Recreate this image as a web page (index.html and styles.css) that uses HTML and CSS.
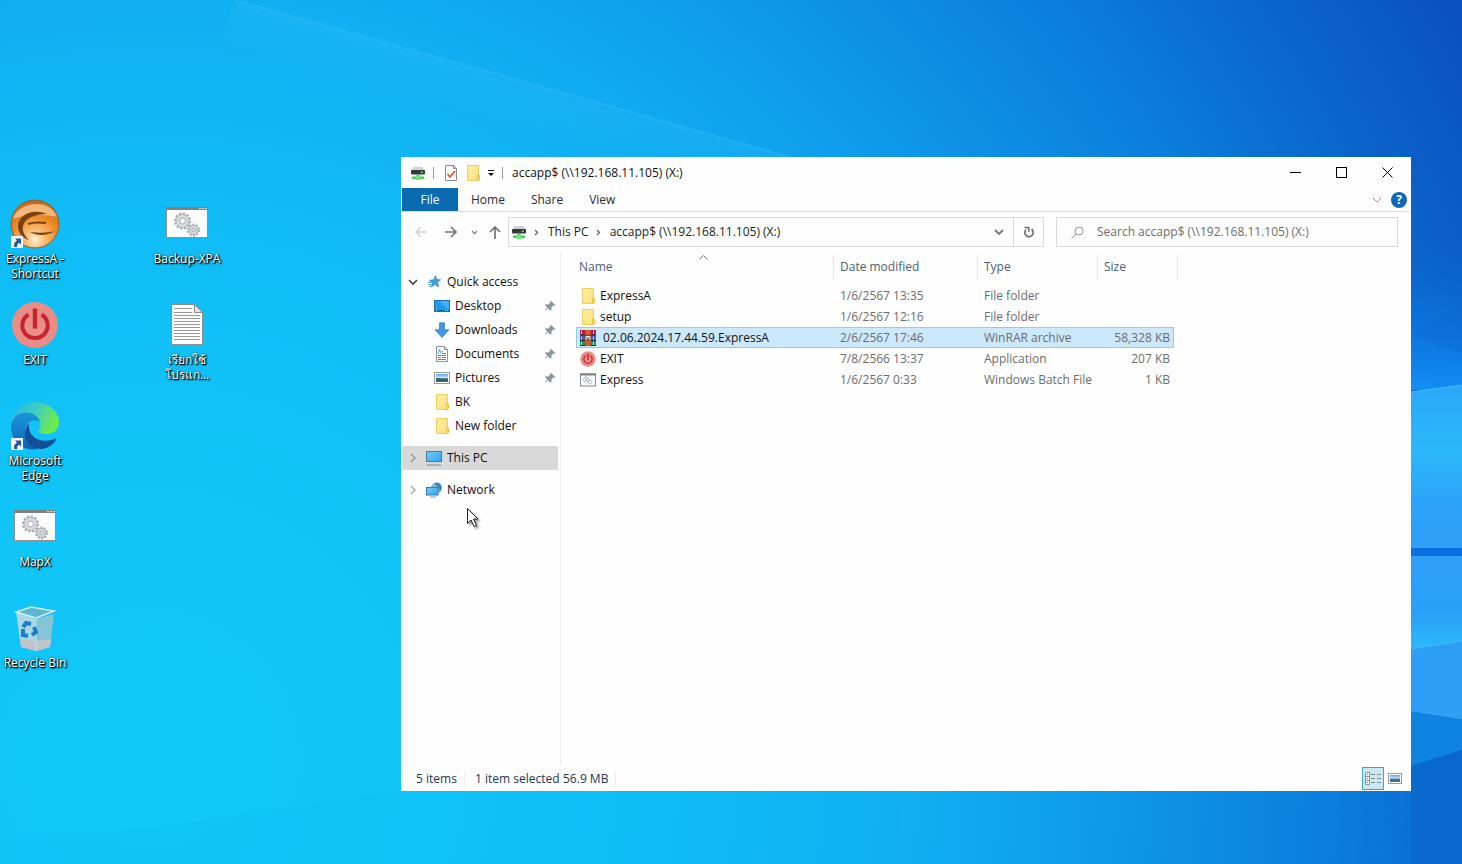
FILE: index.html
```html
<!DOCTYPE html>
<html lang="en">
<head>
<meta charset="utf-8">
<title>accapp$ (\\192.168.11.105) (X:)</title>
<link rel="stylesheet" href="styles.css">
</head>
<body>
<svg class="defs" aria-hidden="true">
  <defs>
    <linearGradient id="fold" x1="0" y1="0" x2="1" y2="1"><stop offset="0" stop-color="#fdeea2"/><stop offset="1" stop-color="#fbe17c"/></linearGradient>
    <linearGradient id="scr" x1="0" y1="0" x2="1" y2="1"><stop offset="0" stop-color="#72cdfb"/><stop offset="1" stop-color="#2fa5ec"/></linearGradient>
    <linearGradient id="photo" x1="0" y1="0" x2="0" y2="1"><stop offset="0" stop-color="#5d9ff0"/><stop offset=".45" stop-color="#c4e6f8"/><stop offset=".6" stop-color="#3d6f74"/><stop offset="1" stop-color="#3b78a6"/></linearGradient>
    <symbol id="i-folder" viewBox="0 0 16 16"><path d="M2.500.5h11v15h-11z" fill="url(#fold)" stroke="#ecd15f"/><path d="M12.500 10.500h2v4l-1 1h-1z" fill="#fbe07a" stroke="#e3bf3c"/></symbol>
    <symbol id="i-drive" viewBox="0 0 16 16"><path d="M3.500 2h9l2 3.500h-13z" fill="#cfd3d3"/><rect x="1" y="5" width="14" height="4.500" rx="1" fill="#35393b"/><rect x="10.500" y="6.500" width="2.500" height="1.500" fill="#38e04b"/><path d="M6.500 9.500h3V11h-3z" fill="#66aa66"/><path d="M2 11.500h12V14H2z" fill="#4dcc55"/><path d="M5.500 10.500h5V15h-5z" fill="#79e47e"/></symbol>
    <symbol id="i-check" viewBox="0 0 16 16"><path d="M2.500.5h8l3 3v12h-11z" fill="#fff" stroke="#8b8b8b"/><path d="M10.500.5v3h3" fill="none" stroke="#8b8b8b"/><path d="M4.500 9l2.500 3 5-6" fill="none" stroke="#e2502c" stroke-width="1.700"/></symbol>
    <symbol id="i-star" viewBox="0 0 16 16"><path d="M9.500 1.500l1.200 4 4 .3-3.300 2.600 1.300 4.600-3.700-2.500L5.200 13l1-4L3.500 6.300l4.200-.6z" fill="#3aa2e4" stroke="#2580c4" stroke-width=".6"/><path d="M1.500 8.500h4M2 10.500h3.500M3 12.500h2" stroke="#68b8e8"/></symbol>
    <symbol id="i-desktop" viewBox="0 0 16 16"><rect x=".5" y="2.500" width="15" height="11" fill="#219bee" stroke="#1571b3"/><path d="M15 3v9L5 3z" fill="#41b2f7"/><path d="M1 12.500h14" stroke="#0b62a3"/><path d="M2 12.500h1m8 0h1m1 0h1" stroke="#fff"/></symbol>
    <symbol id="i-down" viewBox="0 0 16 16"><path d="M5.500.8h5v7H15L8 15.500 1 7.800h4.500z" fill="#3f97e2" stroke="#2d7dca" stroke-width=".7"/></symbol>
    <symbol id="i-doc" viewBox="0 0 16 16"><path d="M2.500.5h8l3 3v12h-11z" fill="#fff" stroke="#8d9499"/><path d="M10.500.5v3h3" fill="none" stroke="#8d9499"/><path d="M4 7.500l1.500-4L7 7.500M8 5.500h1M8 7.500h4M4 9.500h8M4 11.500h3m1 0h4M4 13.500h8" stroke="#3a97c9" fill="none"/></symbol>
    <symbol id="i-pic" viewBox="0 0 16 16"><rect x=".5" y="2.500" width="15" height="11" fill="#fff" stroke="#989ca0"/><path d="M2 4h12v8H2z" fill="url(#photo)"/><path d="M2 8.500c3-1 6 1.500 12 1V11H2z" fill="#315e69"/></symbol>
    <symbol id="i-pc" viewBox="0 0 16 16"><rect x=".5" y="1.500" width="15" height="10" fill="url(#scr)" stroke="#477b9d"/><path d="M1 15h14" stroke="#75899a"/></symbol>
    <symbol id="i-net" viewBox="0 0 16 16"><circle cx="10.500" cy="6" r="5.500" fill="#8bb9d2"/><path d="M8 1.500c3 1 1.500 3 3.500 3s1 3 2.500 4.500C17 6 15.500 1 10.500.5z" fill="#3585b8"/><rect x=".5" y="5.500" width="11.500" height="7.500" fill="url(#scr)" stroke="#347eab"/><path d="M4 15h6" stroke="#6ba2c2"/></symbol>
    <symbol id="i-pin" viewBox="0 0 12 12"><path d="M7 .8L11.200 5l-1.100.7-.7-.2-2 2.200.1 2.300-.9.800L4.200 8.400 1 11.200l-.3-.3L3.400 7.600 1 5.200l.8-.9 2.400.2 2.100-2-.2-.8z" fill="#8b979e"/></symbol>
    <symbol id="i-rar" viewBox="0 0 16 16"><path fill="#b5204c" d="M0 0h16v5H0z"/><path fill="#4658b9" d="M0 5h16v6H0z"/><path fill="#27904a" d="M0 11h16v5H0z"/><path d="M0 5h16M0 10.500h16M0 15.500h16" stroke="#202c3c"/><path d="M1.500 1v3M1.500 6.500v3M1.500 12v3M13.500 1v3M13.500 6.500v3M13.500 12v3" stroke="#d6d9dc"/><path fill="#dc5a27" d="M5.500 0h5v16h-5z"/><path fill="#8d3a24" d="M4.500 5h7v5.500h-7z"/><path d="M6 10V6.500h4V10M8 6.500V9" stroke="#fff" fill="none"/></symbol>
    <symbol id="i-power" viewBox="0 0 48 48"><circle cx="24" cy="24" r="23" fill="#ea8d85"/><path d="M17.500 13.500a12.700 12.700 0 1 0 13 0" fill="none" stroke="#c72432" stroke-width="4"/><path d="M24 7.500v20" stroke="#c72432" stroke-width="4.500"/></symbol>
    <symbol id="i-batch" viewBox="0 0 16 16"><rect x=".5" y="2" width="15" height="12" fill="#fbfbfb" stroke="#868b8f"/><path d="M0 2.500h16" stroke="#7e8387" stroke-width="2"/><circle cx="6" cy="7.500" r="2.500" fill="none" stroke="#89959c" stroke-dasharray="1.200 .5"/><circle cx="6" cy="7.500" r="1" fill="#9aa5ab"/><circle cx="10" cy="10" r="1.800" fill="none" stroke="#81a4b4" stroke-dasharray="1.200 .4"/></symbol>
    <symbol id="i-gears" viewBox="0 0 42 31"><rect x=".5" y=".5" width="41" height="30" fill="#fbfbfb" stroke="#8f8f8f"/><path d="M0 1.500h42" stroke="#808080" stroke-width="3"/><path d="M33 1.500h2m1 0h2m1 0h2" stroke="#ddd"/>
      <circle cx="16.500" cy="14" r="7.500" fill="none" stroke="#a3aaad" stroke-width="2" stroke-dasharray="2.300 1.627"/><circle cx="16.500" cy="14" r="6.500" fill="#d9dddf" stroke="#a3aaad" stroke-width=".8"/><circle cx="16.500" cy="14" r="3" fill="#fff" stroke="#a3aaad"/>
      <circle cx="27.500" cy="23" r="5.500" fill="none" stroke="#a3aaad" stroke-width="1.800" stroke-dasharray="2 1.456"/><circle cx="27.500" cy="23" r="4.600" fill="#d3d8da" stroke="#a3aaad" stroke-width=".8"/><circle cx="27.500" cy="23" r="1.500" fill="#fff" stroke="#9ba3a7"/></symbol>
    <symbol id="i-short" viewBox="0 0 12 12"><rect width="12" height="12" fill="#f4f5f7"/><path d="M4 2.500h6v6L8 6.700C6.500 7.600 6 9 6.300 11H3.200C2.500 8 3.700 5.800 5.900 4.500z" fill="#2756a0"/></symbol>
  </defs>
</svg>

<main class="desktop">
  <svg class="wallpaper" viewBox="0 0 1462 864" preserveAspectRatio="none" aria-hidden="true">
    <defs>
      <radialGradient id="sky" gradientUnits="userSpaceOnUse" cx="150" cy="760" r="1510">
        <stop offset="0" stop-color="#10c9fa"/><stop offset=".2" stop-color="#10c4f8"/><stop offset=".36" stop-color="#10bcf6"/><stop offset=".5" stop-color="#10b0f2"/><stop offset=".6" stop-color="#0f9fec"/><stop offset=".76" stop-color="#0b82dd"/><stop offset=".88" stop-color="#0a68cd"/><stop offset="1" stop-color="#0a50be"/>
      </radialGradient>
      <linearGradient id="beam" gradientUnits="userSpaceOnUse" x1="515" y1="78" x2="500" y2="130"><stop offset="0" stop-color="#35c0fa" stop-opacity=".22"/><stop offset="1" stop-color="#35c0fa" stop-opacity="0"/></linearGradient>
      <linearGradient id="glowtop" x1="0" y1="0" x2="0" y2="1"><stop offset="0" stop-color="#0a66d4" stop-opacity="0"/><stop offset="1" stop-color="#108ef5"/></linearGradient>
      <linearGradient id="pane1" x1="0" y1="0" x2="0" y2="1"><stop offset="0" stop-color="#2aa7f7"/><stop offset=".4" stop-color="#2cb8fa"/><stop offset=".75" stop-color="#2ca2f8"/><stop offset="1" stop-color="#2ea0f6"/></linearGradient>
      <linearGradient id="pane2" x1="0" y1="0" x2="0" y2="1"><stop offset="0" stop-color="#309ff6"/><stop offset=".6" stop-color="#28a0f7"/><stop offset="1" stop-color="#2bbaf9"/></linearGradient>
    </defs>
    <rect width="1462" height="864" fill="url(#sky)"/>
    <path d="M235 0L790 157 770 210 215 53z" fill="url(#beam)"/>
    <path d="M235 0L790 157" stroke="#4cc2f9" stroke-opacity=".25" stroke-width="2"/>
    <path d="M400 791h500v73H0v-24C150 835 260 810 400 791z" fill="#0fb5f3" fill-opacity=".08"/>
    <path d="M1411 240h51v150h-51z" fill="url(#glowtop)"/>
    <path d="M1411 335l51 18v-50z" fill="#0a5fcf" fill-opacity=".25"/>
    <path d="M1411 392l51-7v163h-51z" fill="url(#pane1)"/>
    <path d="M1411 392l51-7" stroke="#49b8fa"/>
    <path d="M1411 548h51v8h-51z" fill="#0b70e2"/>
    <path d="M1411 556h51v85l-51 8z" fill="url(#pane2)"/>
    <path d="M1411 649l51-8v78l-51-8z" fill="#2e9df4"/>
    <path d="M1411 649l51-8M1411 711l51 8" stroke="#41bdf6"/>
    <path d="M1411 711l51 8v31l-51 16z" fill="#0e83e2"/>
    <path d="M1411 766l51-16v114h-51z" fill="#0a67cc" fill-opacity=".7"/>
  </svg>

  <ul class="shortcuts">
    <li><a href="#" class="shortcut"><svg class="art" viewBox="0 0 50 50">
      <defs><radialGradient id="orb" cx=".5" cy=".82" r=".8"><stop offset="0" stop-color="#fff2d8"/><stop offset=".25" stop-color="#f9bd78"/><stop offset=".6" stop-color="#f08a24"/><stop offset="1" stop-color="#b8681c"/></radialGradient></defs>
      <circle cx="25" cy="25" r="24" fill="url(#orb)" stroke="#94602c"/><path d="M3 20C7 3 40-2 47 18c-10-3-32-3-44 2z" fill="#fbc88f" fill-opacity=".8"/><path d="M37 15C24 9 8 15 8 27c0 8 5 12 11 14-5-5-7-9-6-14 2-8 12-12 24-12z" fill="#7a4214"/><path d="M18 25c6-2 10-2 18-1" stroke="#7a4214" stroke-width="2" fill="none"/><path d="M20 33c7 4 17 4 25-1-7 2-16 2-25 1z" fill="#7a4214"/><use href="#i-short" x="1" y="37" width="12" height="12"/></svg><span>ExpressA -<br>Shortcut</span></a></li>
    <li><a href="#" class="shortcut"><svg class="art" viewBox="0 0 50 50"><use href="#i-power" x="1" y="1" width="48" height="48"/></svg><span>EXIT</span></a></li>
    <li><a href="#" class="shortcut"><svg class="art" viewBox="0 0 50 50">
      <defs><linearGradient id="e1" x1="0" y1="0" x2="1" y2=".4"><stop offset="0" stop-color="#29b5e6"/><stop offset=".5" stop-color="#3bccc9"/><stop offset="1" stop-color="#6eea4d"/></linearGradient><linearGradient id="e2" x1="0" y1="0" x2="0" y2="1"><stop offset="0" stop-color="#1a96dc"/><stop offset="1" stop-color="#0e62b5"/></linearGradient></defs>
      <path d="M1 24C2 10 12 1 25 1c14 0 24 10 24 20 0 9-7 12-13 12-5 0-8-1-7-4 2-2 2-4 1-7C27 11 9 9 1 24z" fill="url(#e1)"/><path d="M1 26C2 8 26 7 30 21c-5-4-15-1-15 9 0 9 7 15 13 18C12 51 1 39 1 26z" fill="url(#e2)"/><path d="M19 22c-9 11-2 26 13 26 6-1 11-4 14-9 1-1 0-2-2-1C32 43 17 37 19 22z" fill="#134f98"/><use href="#i-short" x="1" y="37" width="12" height="12"/></svg><span>Microsoft<br>Edge</span></a></li>
    <li><a href="#" class="shortcut"><svg class="art" viewBox="0 0 50 50"><use href="#i-gears" x="4" y="8" width="42" height="31"/></svg><span>MapX</span></a></li>
    <li><a href="#" class="shortcut"><svg class="art" viewBox="0 0 50 50">
      <path d="M6 9l20 7 1 32-16-4z" fill="#a9d7e6"/><path d="M26 16l18-5-4 33-13 4z" fill="#86c4d8"/><path d="M10 36l16 2 15-2-1 8-13 4-16-4z" fill="#c3c4c8"/><path d="M6 9L21 4l23 4-18 7z" fill="#5fb5cc" stroke="#d6edf4" stroke-width="1.500"/><path d="M26 16v32" stroke="#b8dfea"/><g fill="none" stroke="#1c7ecb" stroke-width="4"><path d="M13 24l3-4 5 1"/><path d="M24 24l2 5-4 3"/><path d="M18 33l-5-1 0-6"/></g></svg><span>Recycle Bin</span></a></li>
    <li><a href="#" class="shortcut"><svg class="art" viewBox="0 0 50 50"><use href="#i-gears" x="4" y="8" width="42" height="31"/></svg><span>Backup-XPA</span></a></li>
    <li><a href="#" class="shortcut"><svg class="art" viewBox="0 0 50 50"><path d="M9.500 4.500h23l8 8v32h-31z" fill="#fbfbfb" stroke="#8c8c8c"/><path d="M32.500 4.500v8h8z" fill="#e5e5e5" stroke="#8c8c8c"/><path d="M12 8.500h18m-18 4h18m-18 3h26m-26 3h26m-26 3h26m-26 3h26m-26 3h26m-26 3h26m-26 3h26m-26 3h26m-26 3h26" stroke="#999"/></svg><span lang="th">เรียกใช้<br>โปรแก...</span></a></li>
  </ul>

  <section class="window">
    <header class="titlebar">
      <svg class="ico"><use href="#i-drive"/></svg><i class="rule"></i>
      <button class="tool" aria-label="Properties"><svg class="ico"><use href="#i-check"/></svg></button>
      <button class="tool" aria-label="New folder"><svg class="ico"><use href="#i-folder"/></svg></button>
      <button class="tool" aria-label="Customize Quick Access Toolbar"><svg width="8" height="8"><path d="M1 1.500h6" stroke="#111"/><path d="M1 4h6L4 7z" fill="#111"/></svg></button>
      <i class="rule"></i>
      <h1>accapp$ (\\192.168.11.105) (X:)</h1>
      <div class="controls">
        <button aria-label="Minimize"><svg width="11" height="11"><path d="M0 5.500h11" stroke="#000"/></svg></button>
        <button aria-label="Maximize"><svg width="11" height="11"><rect x=".5" y=".5" width="10" height="10" fill="none" stroke="#000"/></svg></button>
        <button aria-label="Close"><svg width="11" height="11"><path d="M.5.5l10 10m0-10l-10 10" stroke="#000"/></svg></button>
      </div>
    </header>

    <nav class="tabs">
      <button class="file">File</button><button>Home</button><button>Share</button><button>View</button>
      <div class="help">
        <button aria-label="Expand the Ribbon"><svg width="10" height="6"><path d="M1 1l4 4 4-4" fill="none" stroke="#999"/></svg></button>
        <button class="question" aria-label="Help">?</button>
      </div>
    </nav>

    <div class="navigate">
      <div class="arrows">
        <button aria-label="Back" disabled><svg width="14" height="12"><path d="M7 1L2 6l5 5M2 6h11" fill="none" stroke="#d2d2d2" stroke-width="1.500"/></svg></button>
        <button aria-label="Forward"><svg width="14" height="12"><path d="M7 1l5 5-5 5M12 6H1" fill="none" stroke="#737373" stroke-width="1.700"/></svg></button>
        <button class="small" aria-label="Recent locations"><svg width="7" height="5"><path d="M1 1l2.500 2.500L6 1" fill="none" stroke="#888" stroke-width="1.400"/></svg></button>
        <button aria-label="Up"><svg width="12" height="13"><path d="M1 6l5-5 5 5M6 1v12" fill="none" stroke="#737373" stroke-width="1.700"/></svg></button>
      </div>
      <div class="address">
        <svg class="ico"><use href="#i-drive"/></svg>
        <svg class="sep" width="5" height="7"><path d="M1 1l2.500 2.500L1 6" fill="none" stroke="#666" stroke-width="1.300"/></svg>
        <a href="#">This PC</a>
        <svg class="sep" width="5" height="7"><path d="M1 1l2.500 2.500L1 6" fill="none" stroke="#666" stroke-width="1.300"/></svg>
        <a href="#">accapp$ (\\192.168.11.105) (X:)</a>
        <button class="drop" aria-label="Previous locations"><svg width="10" height="7"><path d="M1 1l4 4 4-4" fill="none" stroke="#777" stroke-width="1.800"/></svg></button>
        <button class="refresh" aria-label="Refresh"><svg width="12" height="13"><path d="M3 3.500A4.200 4.200 0 1 0 8.500 3" fill="none" stroke="#6b6b6b" stroke-width="1.600"/><path d="M1.500 1.500h4.200v4.200" fill="none" stroke="#6b6b6b" stroke-width="1.500"/></svg></button>
      </div>
      <label class="search">
        <svg width="13" height="13"><circle cx="8" cy="5" r="4" fill="none" stroke="#999"/><path d="M5 8l-4.500 4.500" stroke="#999"/></svg>
        <input type="text" aria-label="Search" placeholder="Search accapp$ (\\192.168.11.105) (X:)">
      </label>
    </div>

    <div class="body">
      <nav class="tree">
        <a href="#" class="root"><svg class="chev" viewBox="0 0 10 10"><path d="M1 3l4 4 4-4" fill="none" stroke="#444" stroke-width="1.600"/></svg><svg class="ico"><use href="#i-star"/></svg><span>Quick access</span></a>
        <a href="#"><svg class="ico"><use href="#i-desktop"/></svg><span>Desktop</span><svg class="pin"><use href="#i-pin"/></svg></a>
        <a href="#"><svg class="ico"><use href="#i-down"/></svg><span>Downloads</span><svg class="pin"><use href="#i-pin"/></svg></a>
        <a href="#"><svg class="ico"><use href="#i-doc"/></svg><span>Documents</span><svg class="pin"><use href="#i-pin"/></svg></a>
        <a href="#"><svg class="ico"><use href="#i-pic"/></svg><span>Pictures</span><svg class="pin"><use href="#i-pin"/></svg></a>
        <a href="#"><svg class="ico"><use href="#i-folder"/></svg><span>BK</span></a>
        <a href="#"><svg class="ico"><use href="#i-folder"/></svg><span>New folder</span></a>
        <a href="#" class="root apart current"><svg class="chev" viewBox="0 0 10 10"><path d="M3 1l4 4-4 4" fill="none" stroke="#919191" stroke-width="1.400"/></svg><svg class="ico"><use href="#i-pc"/></svg><span>This PC</span></a>
        <a href="#" class="root apart"><svg class="chev" viewBox="0 0 10 10"><path d="M3 1l4 4-4 4" fill="none" stroke="#a5a5a5" stroke-width="1.400"/></svg><svg class="ico"><use href="#i-net"/></svg><span>Network</span></a>
      </nav>

      <div class="files">
        <table>
          <thead><tr>
            <th class="name">Name<svg class="sort" width="9" height="5"><path d="M.5 4.500l4-4 4 4" fill="none" stroke="#777"/></svg></th>
            <th class="date">Date modified</th><th class="type">Type</th><th class="size">Size</th>
          </tr></thead>
          <tbody>
            <tr><td><div class="entry"><svg class="ico"><use href="#i-folder"/></svg>ExpressA</div></td><td>1/6/2567 13:35</td><td>File folder</td><td></td></tr>
            <tr><td><div class="entry"><svg class="ico"><use href="#i-folder"/></svg>setup</div></td><td>1/6/2567 12:16</td><td>File folder</td><td></td></tr>
            <tr class="selected"><td><div class="entry wide"><svg class="ico"><use href="#i-rar"/></svg>02.06.2024.17.44.59.ExpressA</div></td><td>2/6/2567 17:46</td><td>WinRAR archive</td><td>58,328 KB</td></tr>
            <tr><td><div class="entry"><svg class="ico"><use href="#i-power"/></svg>EXIT</div></td><td>7/8/2566 13:37</td><td>Application</td><td>207 KB</td></tr>
            <tr><td><div class="entry"><svg class="ico"><use href="#i-batch"/></svg>Express</div></td><td>1/6/2567 0:33</td><td>Windows Batch File</td><td>1 KB</td></tr>
          </tbody>
        </table>
      </div>
    </div>

    <footer class="status">
      <span class="count">5 items</span><span class="picked">1 item selected</span><span class="weight">56.9 MB</span>
      <div class="views">
        <button class="on" aria-label="Details view"><svg width="18" height="15"><path d="M1.500 1.500h4v12h-4zM1.500 5.500h4m-4 4h4" fill="#fff" stroke="#8e8e8e"/><path d="M3 3.500h1m-1 4h1" stroke="#3b83c4"/><path d="M3 11.500h1" stroke="#d14b4b"/><path d="M7 3.500h4m2 0h4M7 7.500h4m2 0h4M7 11.500h4m2 0h4" stroke="#7b8d92"/></svg></button>
        <button aria-label="Large thumbnails"><svg width="14" height="12"><rect x=".5" y=".5" width="13" height="10" fill="#fff" stroke="#989ca0"/><path d="M2 2h10v7H2z" fill="url(#photo)"/></svg></button>
      </div>
    </footer>
  </section>

  <svg class="cursor" viewBox="0 0 14 22" aria-hidden="true"><path d="M1.500 1.500v15l3.500-3.500 3 6.500 2.500-1-3-6.500H12z" fill="#fff" stroke="#222"/></svg>
</main>
</body>
</html>
```
FILE: styles.css
```css
* { box-sizing: border-box; }

body {
  margin: 0;
  font: 12px/16px "Open Sans", "Noto Sans", sans-serif;
  color: #111;
}

button, input { font: inherit; color: inherit; border: 0; padding: 0; background: none; }
button { display: flex; align-items: center; justify-content: center; }
a { color: inherit; text-decoration: none; }
svg { display: block; flex: none; }

.defs { position: absolute; width: 0; height: 0; }
.ico { width: 16px; height: 16px; }

.desktop { position: relative; min-height: 100vh; overflow: hidden; background: #10b3f4; }
.wallpaper { position: absolute; inset: 0; width: 100%; height: 100%; }

/* desktop shortcuts */
.shortcuts {
  position: absolute;
  left: 0;
  top: 199px;
  margin: 0;
  padding: 0;
  list-style: none;
  display: grid;
  grid-auto-flow: column;
  grid-template-rows: repeat(5, 101px);
  grid-auto-columns: 70px;
  column-gap: 82px;
}
.shortcut {
  display: flex;
  flex-direction: column;
  align-items: center;
  gap: 2px;
  line-height: 15px;
  text-align: center;
  white-space: nowrap;
  color: #fff;
  text-shadow: 1px 1px 1px #000, 1px 1px 2px #000, 0 0 2px #0009;
}
.art { width: 50px; height: 50px; }

/* explorer window */
.window {
  position: absolute;
  inset: 157px 51px 73px 401px;
  display: flex;
  flex-direction: column;
  padding-left: 1px;
  background: #fefefe;
}

.titlebar { display: flex; align-items: center; height: 31px; padding: 0 1px 0 8px; gap: 6px; }
.titlebar h1 { margin: 0; font-size: 12px; font-weight: 400; }
.rule { width: 1px; height: 12px; margin: 0 3px 0 1px; background: #999; }
.controls { display: flex; margin-left: auto; align-self: stretch; }
.controls button { width: 46px; }

.tabs { display: flex; height: 24px; border-bottom: 1px solid #dadbdc; color: #2b2b2b; }
.tabs > button { padding: 0 13px; }
.tabs > .file { width: 56px; background: #0b6bb0; color: #fff; }
.help { display: flex; align-items: center; gap: 9px; margin-left: auto; padding-right: 4px; }
.question { width: 16px; height: 16px; border-radius: 50%; background: #0f67b6; color: #fff; font-weight: 700; }

.navigate { display: flex; align-items: center; height: 40px; padding-right: 13px; color: #222; }
.arrows { display: flex; align-items: center; gap: 14px; width: 106px; padding-left: 12px; }
.arrows button { width: 14px; height: 16px; margin-right: 2px; }
.arrows .small { width: 7px; margin: 0 -4px 0 -3px; }
.address { display: flex; flex: 1; align-items: center; height: 30px; padding-left: 2px; border: 1px solid #d9d9d9; }
.sep { margin: 0 9px 0 7px; }
.drop { width: 29px; margin-left: auto; }
.refresh { width: 30px; align-self: stretch; border-left: 1px solid #d9d9d9; }
.search { display: flex; align-items: center; gap: 13px; width: 342px; height: 30px; margin-left: 12px; padding-left: 14px; border: 1px solid #d9d9d9; }
.search input { flex: 1; min-width: 0; outline: 0; }
.search input::placeholder { color: #6d6d6d; opacity: 1; }

.body { display: flex; flex: 1; min-height: 0; }
.tree { width: 159px; padding: 18px 2px 0 0; border-right: 1px solid #efefef; }
.tree a { display: flex; align-items: center; gap: 5px; height: 24px; padding-left: 32px; }
.tree .root { padding-left: 6px; }
.tree .root .ico { margin-left: 3px; }
.tree .apart { margin-top: 8px; }
.tree .current { background: #d9d9d9; }
.chev { width: 10px; height: 10px; }
.pin { width: 12px; height: 12px; margin: 0 2px 0 auto; }

.files { flex: 1; padding-left: 15px; overflow: hidden; }
table { width: 598px; border-collapse: separate; border-spacing: 0; table-layout: fixed; }
th, td { padding: 0 0 0 6px; text-align: left; font-weight: 400; white-space: nowrap; }
th { position: relative; height: 30px; color: #4c607a; }
th::after { content: ""; position: absolute; top: 3px; right: 0; width: 1px; height: 25px; background: #e3e3e3; }
.name { width: 258px; padding-left: 3px; }
.date { width: 144px; }
.type { width: 120px; }
.size::after { right: -4px; }
.sort { position: absolute; left: 50%; top: 3px; margin-left: -6px; }
thead::after { content: ""; display: block; height: 3px; }
td { height: 21px; color: #6d6d6d; border: solid transparent; border-width: 1px 0; line-height: 19px; }
td:first-child { padding-left: 3px; border-left-width: 1px; color: #111; }
td:last-child { padding-right: 3px; border-right-width: 1px; text-align: right; }
.selected td { background: #cce8fb; border-color: #94cdec; }
.entry { display: flex; align-items: center; gap: 4px; }
.wide { gap: 7px; }

.status { display: flex; align-items: center; height: 25px; padding-left: 14px; color: #1e3656; }
.count { width: 49px; border-right: 1px solid #eee; }
.picked { width: 98px; padding-left: 10px; white-space: nowrap; }
.weight { width: 53px; border-right: 1px solid #eee; }
.views { display: flex; align-items: center; gap: 4px; margin-left: auto; padding-right: 9px; }
.views .on { width: 22px; height: 23px; background: #cce8f3; border: 1px solid #39a5d0; }

.cursor { position: absolute; left: 466px; top: 507px; width: 14px; height: 22px; filter: drop-shadow(2px 2px 1px #0006); }
```
